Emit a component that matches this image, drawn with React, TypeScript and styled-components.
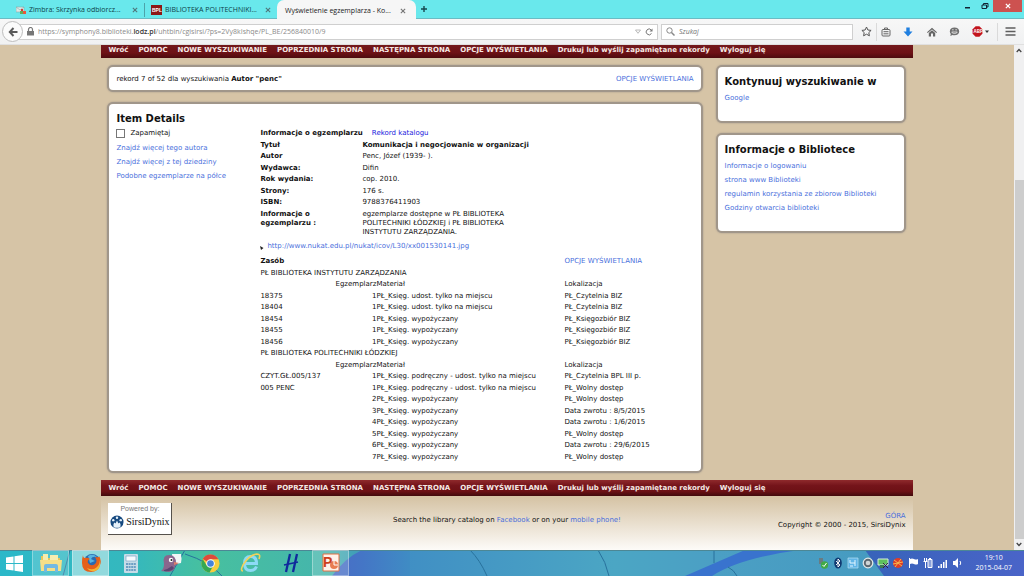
import React from 'react';
import styled, { createGlobalStyle } from 'styled-components';

const Global = createGlobalStyle`
  * { box-sizing: border-box; }
  body { margin: 0; background: #d6c4a6; }
  button, input { font: inherit; }
  table { border-collapse: collapse; table-layout: fixed; width: 100%; }
  th, td { padding: 0; text-align: left; vertical-align: top; font-weight: normal; }
`;

const ui = "'Open Sans', 'Noto Sans', sans-serif";

const Screen = styled.div`
  min-height: 100vh;
  display: flex;
  flex-direction: column;
  font: 7px/11px 'DejaVu Sans', sans-serif;
  color: #111;
`;

/* ---------- browser window ---------- */
const TabStrip = styled.div`
  display: flex;
  height: 19px;
  background: #69e8ec;
  border-bottom: 1px solid #6bbcc4;
  font: 7px/18px ${ui};
  color: #14444c;
`;
const TabList = styled.div`
  display: flex;
  flex: 1;
  min-width: 0;
  padding-left: 10px;
`;
const Tab = styled.div<{ $active?: boolean; $width: number }>`
  display: flex;
  align-items: center;
  gap: 3px;
  width: ${p => p.$width}px;
  height: ${p => (p.$active ? 19 : 18)}px;
  padding: ${p => (p.$active ? '2px 10px 0 8px' : '2px 6px 0')};
  color: ${p => (p.$active ? '#222' : '#0d3f48')};
  background: ${p => (p.$active ? '#f6f6f6' : 'transparent')};
  border-radius: ${p => (p.$active ? '7px 7px 0 0' : '0')};
`;
const TabTitle = styled.span`
  flex: 1;
  white-space: nowrap;
`;
const TabRule = styled.span`
  width: 1px;
  height: 14px;
  margin-top: 3px;
  background: #4da3aa;
`;
const IconButton = styled.button<{ $width?: number }>`
  display: flex;
  align-items: center;
  justify-content: center;
  flex: none;
  width: ${p => (p.$width ? p.$width + 'px' : 'auto')};
  padding: 0;
  border: 0;
  background: none;
  color: #5b5f63;
`;
const CloseWindow = styled(IconButton)`
  width: 29px;
  height: 12px;
  margin-right: 2px;
  background: #cd5250;
`;
const WindowControls = styled.div`
  display: flex;
  align-items: flex-start;
`;
const ControlButton = styled(IconButton)`
  width: 17px;
  height: 12px;
`;
const Toolbar = styled.div`
  display: flex;
  align-items: center;
  height: 26px;
  padding: 0 2px;
  background: linear-gradient(#f7f7f7, #f0f1f2);
  border-bottom: 1px solid #e0e0e0;
  font: 7px/14px ${ui};
  color: #8a8a8a;
`;
const Back = styled(IconButton)`
  position: relative;
  width: 21px;
  height: 21px;
  border: 1px solid #bdbdbd;
  border-radius: 50%;
  background: #fbfbfb;
`;
const Field = styled.div<{ $search?: boolean }>`
  display: flex;
  align-items: center;
  gap: 4px;
  flex: ${p => (p.$search ? '0 1 192px' : '1')};
  min-width: 0;
  height: 16px;
  margin-left: ${p => (p.$search ? '3px' : '-4px')};
  padding: 0 4px 0 ${p => (p.$search ? '4px' : '7px')};
  background: #fff;
  border: 1px solid #cfcfcf;
`;
const Address = styled.div`
  flex: 1;
  white-space: nowrap;
  overflow: hidden;
  outline: 0;
  b { color: #333; font-weight: 600; }
`;
const SearchInput = styled.input`
  flex: 1;
  min-width: 0;
  padding: 0;
  border: 0;
  outline: 0;
  background: none;
  &::placeholder { color: #777; font-style: italic; opacity: 1; }
`;
const ToolRule = styled.span`
  width: 1px;
  height: 18px;
  background: #dadada;
`;
const Tools = styled.div`
  display: flex;
  align-items: center;
  padding-left: 4px;
`;

/* ---------- catalogue page ---------- */
const Viewport = styled.div`
  display: flex;
  flex: 1;
  background: #d6c4a6;
`;
const Scroller = styled.div`
  display: flex;
  flex: 1;
  justify-content: center;
`;
const Page = styled.div`
  display: flex;
  flex-direction: column;
  width: 80%;
`;
const Nav = styled.nav<{ $clipped?: boolean }>`
  display: flex;
  gap: 10px;
  height: ${p => (p.$clipped ? 13 : 16)}px;
  padding: ${p => (p.$clipped ? 0 : 3)}px 7px 0;
  background: ${p => (p.$clipped ? 'linear-gradient(#73191c, #6d1115 60%, #4d0b0e)' : 'linear-gradient(#8f2a2c, #74141a 35%, #6d1115 70%, #420a0c)')};
  font-weight: bold;
  white-space: nowrap;
  a { color: #f5e9e4; text-decoration: none; }
`;
const Columns = styled.div`
  display: grid;
  grid-template-columns: 1fr 190px;
  gap: 13px;
  padding: 7px 7px 7px 6px;
`;
const Stack = styled.div`
  display: flex;
  flex-direction: column;
  gap: 10px;
`;
const Panel = styled.section`
  padding: 7px;
  background: #fff;
  border: 2px solid #a0968a;
  border-radius: 6px;
  box-shadow: 0 0 2px #a0968a;
`;
const ResultPanel = styled(Panel)`
  display: flex;
  justify-content: space-between;
  height: 27px;
`;
const SidePanel = styled(Panel)`
  padding-bottom: 13px;
`;
const DetailPanel = styled(Panel)`
  padding-bottom: 8px;
`;
const Link = styled.a`
  color: #4a6fdc;
  text-decoration: none;
`;
const Heading = styled.h2`
  margin: 0;
  font-size: 10px;
  line-height: 15px;
`;
const LinkList = styled.ul`
  display: flex;
  flex-direction: column;
  gap: 3px;
  margin: 0;
  padding: 4px 0;
  list-style: none;
`;
const Details = styled.div`
  display: grid;
  grid-template-columns: 144px 1fr;
  margin-top: 2px;
`;
const Remember = styled.label`
  display: flex;
  align-items: center;
  gap: 5px;
`;
const Tick = styled.input`
  appearance: none;
  width: 9px;
  height: 9px;
  margin: 0;
  border: 1px solid #777;
  background: #fff;
`;
const RecordTitle = styled.div`
  display: flex;
  gap: 9px;
  height: 12px;
`;
const BlueLink = styled(Link)`
  color: #2222dd;
`;
const Facts = styled.table`
  th { width: 102px; font-weight: bold; }
  tr:nth-child(even) td { padding-bottom: 1px; }
  tr:first-child td { font-weight: bold; }
  tr:last-child > * { line-height: 9px; padding-top: 1px; }
  tr:last-child td { padding-right: 160px; }
`;
const Source = styled.div`
  display: flex;
  align-items: center;
  gap: 3px;
  padding: 4px 0;
`;
const Holdings = styled.table`
  white-space: nowrap;
  tr:nth-child(odd) > * { padding-bottom: 1px; }
`;
const Copy = styled.td`
  text-align: right;
`;
const CopyHead = styled.th`
  text-align: right;
`;
const Strong = styled.th`
  font-weight: bold;
`;
const Footer = styled.footer`
  display: grid;
  grid-template-columns: 1fr auto 1fr;
  flex: 1;
  align-items: start;
  margin-top: 2px;
  padding: 5px 7px 14px 7px;
  background: linear-gradient(#d6c4a6, #fdfbf8);
`;
const Badge = styled.div`
  display: flex;
  flex-direction: column;
  align-items: center;
  width: 64px;
  height: 32px;
  background: #fff;
  border: solid #55514c;
  border-width: 0 1px 1px 0;
  font: 7px/11px 'Liberation Sans', sans-serif;
  color: #777;
`;
const Brand = styled.div`
  display: flex;
  align-items: center;
  gap: 2px;
  font: 10px/15px 'Liberation Serif', serif;
  color: #111;
`;
const FooterText = styled.div<{ $end?: boolean }>`
  padding-top: ${p => (p.$end ? 9 : 13)}px;
  line-height: 9px;
  text-align: ${p => (p.$end ? 'right' : 'center')};
`;
const Scrollbar = styled.div`
  display: flex;
  flex-direction: column;
  width: 10px;
  background: #f0f0f1;
`;
const Gap = styled.div`
  flex: 124;
`;
const Thumb = styled.div`
  flex: 359;
  margin: 0 0 0 1px;
  background: #cdcdcd;
`;
const ScrollButton = styled(IconButton)`
  width: 10px;
  height: 11px;
`;

/* ---------- taskbar ---------- */
const Taskbar = styled.div`
  position: relative;
  display: flex;
  justify-content: space-between;
  height: 26px;
  font: 7px/10px ${ui};
  color: #fff;
`;
const Wallpaper = styled.svg`
  position: absolute;
  inset: 0;
  width: 100%;
  height: 100%;
`;
const Apps = styled.div`
  position: relative;
  display: flex;
  gap: 3px;
`;
const AppButton = styled.button<{ $state?: 'open' | 'active' | 'start' }>`
  display: flex;
  align-items: center;
  justify-content: center;
  width: ${p => (p.$state === 'start' ? 29 : 37)}px;
  padding: 0;
  border: ${p => (p.$state === 'open' || p.$state === 'active' ? '1px solid #ffffff55' : '0')};
  background: ${p => (p.$state === 'active' ? '#ffffff77' : p.$state === 'open' ? '#ffffff2e' : 'none')};
`;
const Tray = styled.div`
  position: relative;
  display: flex;
  align-items: center;
  gap: 3px;
  padding-right: 12px;
`;
const Clock = styled.time`
  margin-left: 8px;
  text-align: center;
`;

const Cross = ({ color = '#4f777c' }: { color?: string }) => (
  <svg width="6" height="6" viewBox="0 0 7 7" stroke={color} strokeWidth="1.3"><path d="M1 1l5 5M6 1L1 6" /></svg>
);

const navItems = ['Wróć', 'POMOC', 'NOWE WYSZUKIWANIE', 'POPRZEDNIA STRONA', 'NASTĘPNA STRONA', 'OPCJE WYŚWIETLANIA', 'Drukuj lub wyślij zapamiętane rekordy', 'Wyloguj się'];
const NavBar = ({ clipped }: { clipped?: boolean }) => (
  <Nav $clipped={clipped}>{navItems.map(t => <a href="#" key={t}>{t}</a>)}</Nav>
);

const Links = ({ items }: { items: string[] }) => (
  <LinkList>{items.map(t => <li key={t}><Link href="#">{t}</Link></li>)}</LinkList>
);

const facts: [string, string][] = [
  ['Tytuł', 'Komunikacja i negocjowanie w organizacji'],
  ['Autor', 'Penc, Józef (1939- ).'],
  ['Wydawca:', 'Difin'],
  ['Rok wydania:', 'cop. 2010.'],
  ['Strony:', '176 s.'],
  ['ISBN:', '9788376411903'],
  ['Informacje o egzemplarzu :', 'egzemplarze dostępne w PŁ BIBLIOTEKA POLITECHNIKI ŁÓDZKIEJ i PŁ BIBLIOTEKA INSTYTUTU ZARZĄDZANIA.'],
];

const onSite = 'PŁ_Księg. udost. tylko na miejscu';
const loan = 'PŁ_Księg. wypożyczany';
const reference = 'PŁ_Księg. podręczny - udost. tylko na miejscu';
const libraries: { name: string; rows: [string, number, string, string][] }[] = [
  {
    name: 'PŁ BIBLIOTEKA INSTYTUTU ZARZĄDZANIA',
    rows: [
      ['18375', 1, onSite, 'PŁ_Czytelnia BIZ'],
      ['18404', 1, onSite, 'PŁ_Czytelnia BIZ'],
      ['18454', 1, loan, 'PŁ_Księgozbiór BIZ'],
      ['18455', 1, loan, 'PŁ_Księgozbiór BIZ'],
      ['18456', 1, loan, 'PŁ_Księgozbiór BIZ'],
    ],
  },
  {
    name: 'PŁ BIBLIOTEKA POLITECHNIKI ŁÓDZKIEJ',
    rows: [
      ['CZYT.GŁ.005/137', 1, reference, 'PŁ_Czytelnia BPL III p.'],
      ['005 PENC', 1, reference, 'PŁ_Wolny dostęp'],
      ['', 2, loan, 'PŁ_Wolny dostęp'],
      ['', 3, loan, 'Data zwrotu : 8/5/2015'],
      ['', 4, loan, 'Data zwrotu : 1/6/2015'],
      ['', 5, loan, 'PŁ_Wolny dostęp'],
      ['', 6, loan, 'Data zwrotu : 29/6/2015'],
      ['', 7, loan, 'PŁ_Wolny dostęp'],
    ],
  },
];

const HoldingsTable = () => (
  <Holdings>
    <colgroup>
      <col width="74" /><col width="42" /><col width="188" /><col />
    </colgroup>
    <tbody>
      <tr>
        <Strong colSpan={3}>Zasób</Strong>
        <td><Link href="#">OPCJE WYŚWIETLANIA</Link></td>
      </tr>
      {libraries.map(lib => (
        <React.Fragment key={lib.name}>
          <tr><th colSpan={4}>{lib.name}</th></tr>
          <tr><td /><CopyHead>Egzemplarz</CopyHead><th>Materiał</th><th>Lokalizacja</th></tr>
          {lib.rows.map(([call, copy, kind, place], i) => (
            <tr key={i}><td>{call}</td><Copy>{copy}</Copy><td>{kind}</td><td>{place}</td></tr>
          ))}
        </React.Fragment>
      ))}
    </tbody>
  </Holdings>
);

const BrowserChrome = () => (
  <header>
    <TabStrip>
      <TabList>
        <Tab $width={134}>
          <svg width="10" height="10" viewBox="0 0 10 10">
            <path d="M0 2h8v5H0z" fill="#dfe9e6" stroke="#8aa" strokeWidth=".6" /><path d="M0 2l4 3 4-3" fill="none" stroke="#8aa" strokeWidth=".6" />
            <path d="M5 4h2v2H5z" fill="#d33" /><path d="M7 6h3v3H7z" fill="#e8573a" /><path d="M4 6h3v3H4z" fill="#5fae57" />
          </svg>
          <TabTitle>Zimbra: Skrzynka odbiorcz...</TabTitle>
          <IconButton aria-label="Zamknij kartę"><Cross /></IconButton>
        </Tab>
        <TabRule />
        <Tab $width={132}>
          <svg width="11" height="10" viewBox="0 0 11 10"><rect width="11" height="10" fill="#8c1717" /><text x="1" y="7" fontSize="5" fontWeight="700" fontFamily="Liberation Sans" fill="#fff">BPL</text></svg>
          <TabTitle>BIBLIOTEKA POLITECHNIKI...</TabTitle>
          <IconButton aria-label="Zamknij kartę"><Cross /></IconButton>
        </Tab>
        <Tab $active $width={139}>
          <TabTitle>Wyświetlenie egzemplarza - Ko...</TabTitle>
          <IconButton aria-label="Zamknij kartę"><Cross color="#777" /></IconButton>
        </Tab>
        <IconButton $width={16} aria-label="Nowa karta">
          <svg width="8" height="8" viewBox="0 0 8 8" stroke="#17474f" strokeWidth="1.4"><path d="M4 1v6M1 4h6" /></svg>
        </IconButton>
      </TabList>
      <WindowControls>
        <ControlButton aria-label="Minimalizuj"><svg width="8" height="8" viewBox="0 0 8 8"><path d="M1 5h5v1.5H1z" fill="#123" /></svg></ControlButton>
        <ControlButton aria-label="Przywróć"><svg width="8" height="8" viewBox="0 0 8 8" fill="none" stroke="#123"><path d="M1 3h4.500v3.500H1zM2.500 3V1.500H7V5H5.500" /></svg></ControlButton>
        <CloseWindow aria-label="Zamknij"><svg width="6" height="6" viewBox="0 0 7 7" stroke="#fff" strokeWidth="1.5"><path d="M1 1l5 5M6 1L1 6" /></svg></CloseWindow>
      </WindowControls>
    </TabStrip>
    <Toolbar>
      <Back aria-label="Wstecz">
        <svg width="10" height="10" viewBox="0 0 10 10" fill="none" stroke="#5a5a5a" strokeWidth="2"><path d="M5.500 1L1.800 5l3.700 4M2 5h7.500" /></svg>
      </Back>
      <Field>
        <svg width="7" height="9" viewBox="0 0 7 9"><path d="M0 4h7v4.500H0z" fill="#777" /><path d="M1.500 4.500V2.500a2 2 0 014 0v2" fill="none" stroke="#777" strokeWidth="1.200" /></svg>
        <Address role="textbox" aria-label="Adres" contentEditable suppressContentEditableWarning>
          https://symphony8.biblioteki.<b>lodz.pl</b>/uhtbin/cgisirsi/?ps=2Vy8kIshqe/PL_BE/256840010/9
        </Address>
        <svg width="6" height="5" viewBox="0 0 6 5" fill="none" stroke="#aaa" strokeWidth=".8"><path d="M.5 1h5L3 4.300z" /></svg>
        <IconButton aria-label="Odśwież"><svg width="8" height="8" viewBox="0 0 8 8"><path d="M6.500 5.500A2.900 2.900 0 116.300 2" fill="none" stroke="#777" /><path d="M7.500.5v3h-3z" fill="#777" /></svg></IconButton>
      </Field>
      <Field $search>
        <svg width="9" height="9" viewBox="0 0 9 9" fill="none" stroke="#888"><circle cx="3.500" cy="3.500" r="2.700" /><path d="M5.500 5.500L8.500 8.500" strokeWidth="1.500" /></svg>
        <SearchInput aria-label="Szukaj" placeholder="Szukaj" />
      </Field>
      <Tools>
        <IconButton $width={19} aria-label="Zakładka"><svg width="11" height="11" viewBox="0 0 11 11" fill="none" stroke="#555"><path d="M5.500 1l1.400 3 3.200.4-2.300 2.200.6 3.200-2.900-1.600-2.900 1.600.6-3.200L.9 4.400 4.100 4z" /></svg></IconButton>
        <ToolRule />
        <IconButton $width={18} aria-label="Lista zakładek"><svg width="10" height="10" viewBox="0 0 10 10" fill="none" stroke="#666"><rect x="1" y="2.500" width="8" height="6.500" rx="1" /><path d="M3.500 2.500V1h3v1.500M2.500 4.700h5M2.500 6.800h5" /></svg></IconButton>
        <IconButton $width={25} aria-label="Pobieranie"><svg width="10" height="10" viewBox="0 0 10 10"><path d="M3.300.5h3.400v4h2.800L5 9.500.5 4.500h2.800z" fill="#1f7fe0" /></svg></IconButton>
        <IconButton $width={23} aria-label="Strona startowa"><svg width="10" height="10" viewBox="0 0 10 10"><path d="M5 .8L0 5.300l.7.7L5 2.400 9.300 6l.7-.7zM1.800 6L5 3.300 8.200 6v3.500H6V6.500H4v3H1.800z" fill="#666" /></svg></IconButton>
        <IconButton $width={23} aria-label="Rozmowa"><svg width="11" height="11" viewBox="0 0 11 11"><path d="M5.500 1.500c2.800 0 4.700 1.700 4.700 3.900S8.300 9.300 5.500 9.300c-.7 0-1.300-.1-1.900-.3L1.300 10l.5-2.100C1.200 7.200.8 6.400.8 5.400c0-2.200 1.900-3.900 4.700-3.900z" fill="#707070" /><path d="M3 3.800h1.700M6.300 3.800H8M2.700 6h5.600c-1 2-4.600 2-5.600 0z" stroke="#eee" strokeWidth=".8" fill="none" /></svg></IconButton>
        <IconButton $width={31} aria-label="Adblock Plus">
          <svg width="20" height="11" viewBox="0 0 20 11"><path d="M3.600.3h3.800l3 3v4.400l-3 3H3.600l-3-3V3.300z" fill="#c3141c" /><text x="1.500" y="7.200" fontSize="4.500" fontWeight="700" fontFamily="Liberation Sans" fill="#fff">ABP</text><path d="M13 4.500h4L15 7z" fill="#333" /></svg>
        </IconButton>
        <ToolRule />
        <IconButton $width={24} aria-label="Menu"><svg width="11" height="9" viewBox="0 0 11 9" stroke="#5e5e5e" strokeWidth="1.600"><path d="M.5 1h10M.5 4.500h10M.5 8h10" /></svg></IconButton>
      </Tools>
    </Toolbar>
  </header>
);

const SystemBar = () => (
  <Taskbar>
    <Wallpaper viewBox="0 0 1024 26" preserveAspectRatio="none" aria-hidden="true">
      <defs>
        <linearGradient id="wall">
          <stop offset="0" stopColor="#2bb8c9" /><stop offset=".13" stopColor="#35b8bd" /><stop offset=".2" stopColor="#47c09f" /><stop offset=".32" stopColor="#45b5ac" />
          <stop offset=".37" stopColor="#3f8cc4" /><stop offset=".6" stopColor="#4ba6c4" /><stop offset=".7" stopColor="#4b9fc4" /><stop offset=".88" stopColor="#459ac0" />
        </linearGradient>
        <linearGradient id="edge"><stop offset="0" stopColor="#4a6cc6" /><stop offset=".4" stopColor="#4476c6" /><stop offset="1" stopColor="#3f8cc4" /></linearGradient>
        <linearGradient id="night"><stop offset="0" stopColor="#3763ba" /><stop offset="1" stopColor="#4a64c8" /></linearGradient>
      </defs>
      <path d="M0 0h1024v26H0z" fill="url(#wall)" />
      <path d="M332 26Q345 8 362 0H410V26z" fill="url(#edge)" />
      <path d="M685 26L745 0H800Q740 8 712 26z" fill="#3973ce" />
      <path d="M865 0H1024V26H884z" fill="url(#night)" />
      <path d="M185 0L170 26M185 4Q210 12 222 26M70 0L63 26M470 0Q480 10 487 26M598 0Q606 12 609 26M714 0v13M728 17q6 3 9 9" fill="none" stroke="#28719c" strokeWidth="1" />
      <path d="M0 0h1024v1H0z" fill="#4c8795" />
    </Wallpaper>
    <Apps>
      <AppButton $state="start" aria-label="Start"><svg width="17" height="17" viewBox="0 0 17 17" fill="#fff"><path d="M0 2.500l7.500-1V8H0zM8.500 1.300L17 0v8H8.500zM0 9h7.500v6.500L0 14.500zM8.500 9H17v8l-8.500-1.300z" /></svg></AppButton>
      <AppButton $state="open" aria-label="Eksplorator">
        <svg width="22" height="20" viewBox="0 0 22 20"><path d="M1 3h6l1 2h12v13H1z" fill="#e9c65b" /><path d="M3 1h5v8H3zM10 2h8v8h-8z" fill="#f7edb0" /><path d="M0 7h22l-1 11H1z" fill="#f6df88" /><path d="M4 19v-6q0-2 2-2h10q2 0 2 2v6h-3v-4H7v4z" fill="#73b9e2" /></svg>
      </AppButton>
      <AppButton $state="active" aria-label="Firefox">
        <svg width="20" height="20" viewBox="0 0 20 20"><circle cx="11" cy="9" r="8" fill="#2a69b0" /><path d="M7 3q5-3 9 1-5-1-6 2l4 2-5 2z" fill="#57b4e2" /><path d="M2 2q0 3 2 3 3-1 5 1-3 1-2 4 3 4 7 1 3-3 0-7 5 1 4-1 3 4 1 9-2 7-9 7Q1 19 1 10q0-5 1-8z" fill="#e66019" /><path d="M18 4q2 6-2 10-4 4-10 1 3 4 8 3 6-2 5-9z" fill="#f6b331" /></svg>
      </AppButton>
      <AppButton aria-label="Kalkulator">
        <svg width="14" height="19" viewBox="0 0 14 19"><rect width="14" height="19" rx="1" fill="#c7dce8" /><path d="M2 2h10v5H2z" fill="#f8fbff" stroke="#7ca6c4" strokeWidth=".7" /><path d="M2 10h10M2 13h10M2 16h10" stroke="#6d9fc4" strokeWidth="2" strokeDasharray="2 .6" /></svg>
      </AppButton>
      <AppButton aria-label="Pidgin">
        <svg width="22" height="20" viewBox="0 0 22 20"><path d="M12 1h9q1 5 0 9l-5 1-3 3z" fill="#f3f6f6" /><path d="M1 18q3-2 3-7Q2 2 9 2t7 8l2 1-3 2q0 5-6 6z" fill="#8a668d" /><path d="M4 17q4-1 8-4l2 2q-3 4-10 3z" fill="#5c4573" /><circle cx="11" cy="7" r="2.200" fill="#fff" /><circle cx="11.500" cy="7" r="1" fill="#222" /><path d="M14 9l5 1-5 2z" fill="#dc7d68" /></svg>
      </AppButton>
      <AppButton aria-label="Chrome">
        <svg width="19" height="19" viewBox="0 0 20 20"><circle cx="10" cy="10" r="9.500" fill="#f7ce3e" /><path d="M10 10L1.800 5.200A9.500 9.500 0 0118.300 5.500H10z" fill="#dd4b3c" /><path d="M1.800 5.200A9.500 9.500 0 009 19.500L13 12l-3-2-4 2z" fill="#35a852" /><circle cx="10" cy="10" r="4.500" fill="#fff" /><circle cx="10" cy="10" r="3.500" fill="#4683d9" /></svg>
      </AppButton>
      <AppButton aria-label="Internet Explorer">
        <svg width="21" height="20" viewBox="0 0 21 20" fill="none"><path d="M16.500 13.500q-1.500 4-6 4-6 0-6-7t6-7q6 0 6 7H5" stroke="#8cdaf6" strokeWidth="3" /><path d="M3 18Q0 18 3 12 9 2 17 1q4 0 2 5" stroke="#f2d15b" strokeWidth="1.600" /></svg>
      </AppButton>
      <AppButton aria-label="Notatnik H">
        <svg width="16" height="20" viewBox="0 0 16 20" fill="none" stroke="#102a9c" strokeWidth="2.300"><path d="M7 1L3 19M14 1l-4 18" /><path d="M1 12l14-3" strokeWidth="1.500" /></svg>
      </AppButton>
      <AppButton $state="open" aria-label="PowerPoint">
        <svg width="20" height="20" viewBox="0 0 20 20"><path d="M2 1h16v17H2z" fill="#fff2e9" stroke="#e07144" /><circle cx="13" cy="12" r="4" fill="#e97d52" /><path d="M13 8v4h4" stroke="#fff" fill="none" /><text x="2" y="14" fontSize="14" fontWeight="700" fontFamily="Liberation Sans" fill="#cb3f1c">P</text></svg>
      </AppButton>
    </Apps>
    <Tray>
      <svg width="12" height="12" viewBox="0 0 12 12"><path d="M2 1h4v6H2z" fill="#697b82" /><circle cx="7.500" cy="8" r="3.700" fill="#42a946" /><path d="M5.500 8l1.500 1.500L9.500 6" fill="none" stroke="#fff" /></svg>
      <svg width="12" height="12" viewBox="0 0 12 12"><ellipse cx="6" cy="6" rx="3.800" ry="5.500" fill="#103a72" /><path d="M4 4l4 4-2 2V2l2 2-4 4" fill="none" stroke="#fff" strokeWidth=".9" /></svg>
      <svg width="12" height="12" viewBox="0 0 12 12"><path d="M1 1h10v10H1z" fill="#61b5e6" stroke="#b4dff4" strokeWidth=".7" /><path d="M3 3v3h5M8 3v6M3 9h3" fill="none" stroke="#e5f6ff" /></svg>
      <svg width="12" height="12" viewBox="0 0 12 12"><circle cx="6" cy="6" r="4.800" fill="#5d6870" stroke="#e4e8e9" strokeWidth="1.200" /><circle cx="6" cy="6" r="2.300" fill="#d0d5d6" /></svg>
      <svg width="12" height="12" viewBox="0 0 12 12"><path d="M1 2h10v6H1z" fill="#5ec05d" stroke="#d8efd8" /><path d="M3 8h4v3H3z" fill="#3a7b51" /><path d="M6 6l5 5M11 6l-5 5" stroke="#314" strokeWidth=".9" /></svg>
      <svg width="12" height="12" viewBox="0 0 12 12"><circle cx="6" cy="6" r="5" fill="#df3e28" /><path d="M2 3l8 6M9 2L3 10M1 7l10-2" stroke="#f7b44e" /></svg>
      <svg width="12" height="12" viewBox="0 0 12 12" fill="#fff"><path d="M2 1h1v10H2zM3 2q2-1 4 0t4 0v5q-2 1-4 0T3 7z" /></svg>
      <svg width="12" height="12" viewBox="0 0 12 12"><path d="M6 2.500h4v8H6zM7 1.500h2" fill="#ffffff66" stroke="#fff" /><path d="M2.500 1v3M4.500 1v3M1.500 4.500h4M3.500 5v6" stroke="#fff" fill="none" /></svg>
      <svg width="12" height="12" viewBox="0 0 12 12" fill="#fff"><path d="M1 9h1.500v2H1zM3.500 7H5v4H3.500zM6 5h1.500v6H6zM8.500 3H10v8H8.500z" /></svg>
      <svg width="12" height="12" viewBox="0 0 12 12"><path d="M1 4h2l3-3v10L3 8H1z" fill="#fff" /><path d="M8 4q1.500 2 0 4" stroke="#fff" fill="none" /></svg>
      <Clock>19:10<br />2015-04-07</Clock>
    </Tray>
  </Taskbar>
);

export default function App() {
  return (
    <Screen>
      <Global />
      <BrowserChrome />
      <Viewport>
        <Scroller>
          <Page>
            <NavBar clipped />
            <Columns>
              <Stack as="main">
                <ResultPanel>
                  <span>rekord 7 of 52 dla wyszukiwania <b>Autor "penc"</b></span>
                  <Link href="#">OPCJE WYŚWIETLANIA</Link>
                </ResultPanel>
                <DetailPanel>
                  <Heading>Item Details</Heading>
                  <Details>
                    <div>
                      <Remember><Tick type="checkbox" />Zapamiętaj</Remember>
                      <Links items={['Znajdź więcej tego autora', 'Znajdź więcej z tej dziedziny', 'Podobne egzemplarze na półce']} />
                    </div>
                    <div>
                      <RecordTitle><b>Informacje o egzemplarzu</b><BlueLink href="#">Rekord katalogu</BlueLink></RecordTitle>
                      <Facts>
                        <tbody>{facts.map(([k, v]) => <tr key={k}><th scope="row">{k}</th><td>{v}</td></tr>)}</tbody>
                      </Facts>
                      <Source>
                        <svg width="4" height="6" viewBox="0 0 4 6"><path d="M0 2l3.500 2L1 6z" fill="#222" /></svg>
                        <Link href="#">http://www.nukat.edu.pl/nukat/icov/L30/xx001530141.jpg</Link>
                      </Source>
                      <HoldingsTable />
                    </div>
                  </Details>
                </DetailPanel>
              </Stack>
              <Stack as="aside">
                <SidePanel>
                  <Heading>Kontynuuj wyszukiwanie w</Heading>
                  <Links items={['Google']} />
                </SidePanel>
                <SidePanel>
                  <Heading>Informacje o Bibliotece</Heading>
                  <Links items={['Informacje o logowaniu', 'strona www Biblioteki', 'regulamin korzystania ze zbiorow Biblioteki', 'Godziny otwarcia biblioteki']} />
                </SidePanel>
              </Stack>
            </Columns>
            <NavBar />
            <Footer>
              <Badge>
                Powered by:
                <Brand>
                  <svg width="14" height="14" viewBox="0 0 15 15"><circle cx="7.500" cy="7.500" r="7" fill="#174a80" /><g fill="#e5f1fa"><circle cx="7.500" cy="3" r="1.300" /><circle cx="3.500" cy="5.500" r="1.300" /><circle cx="11.500" cy="5.500" r="1.300" /><path d="M4 13q-1-4 1-5l1 1 1.500-3L9 9l1-1q2 1 1 5-3 1.500-7 0z" /></g></svg>
                  SirsiDynix
                </Brand>
              </Badge>
              <FooterText>Search the library catalog on <Link href="#">Facebook</Link> or on your <Link href="#">mobile phone!</Link></FooterText>
              <FooterText $end><Link href="#">GÓRA</Link><br />Copyright © 2000 - 2015, SirsiDynix</FooterText>
            </Footer>
          </Page>
        </Scroller>
        <Scrollbar>
          <ScrollButton aria-label="W górę"><svg width="6" height="5" viewBox="0 0 6 5" fill="none" stroke="#444" strokeWidth="1.300"><path d="M.7 4L3 1.500 5.300 4" /></svg></ScrollButton>
          <Gap />
          <Thumb />
          <ScrollButton aria-label="W dół"><svg width="6" height="5" viewBox="0 0 6 5" fill="none" stroke="#444" strokeWidth="1.300"><path d="M.7 1L3 3.500 5.300 1" /></svg></ScrollButton>
        </Scrollbar>
      </Viewport>
      <SystemBar />
    </Screen>
  );
}
